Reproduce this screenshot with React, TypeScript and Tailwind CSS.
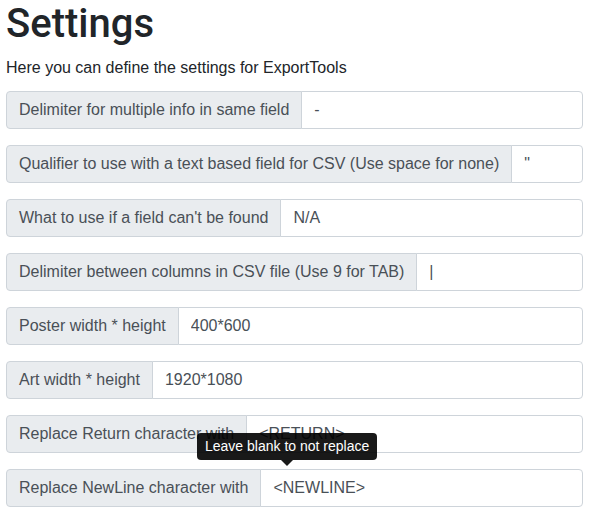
const rows: { label: string; value: string }[] = [
  { label: 'Delimiter for multiple info in same field', value: '-' },
  { label: 'Qualifier to use with a text based field for CSV (Use space for none)', value: '"' },
  { label: "What to use if a field can't be found", value: 'N/A' },
  { label: 'Delimiter between columns in CSV file (Use 9 for TAB)', value: '|' },
  { label: 'Poster width * height', value: '400*600' },
  { label: 'Art width * height', value: '1920*1080' },
  { label: 'Replace Return character with', value: '<RETURN>' },
  { label: 'Replace NewLine character with', value: '<NEWLINE>' },
];

function InputGroup({ label, value, children }: { label: string; value: string; children?: React.ReactNode }) {
  return (
    <div className="relative flex h-[38px] w-full items-stretch">
      <span className="flex items-center whitespace-nowrap rounded-l-[4px] border border-[#ced4da] bg-[#e9ecef] px-3 text-[16px] text-[#495057]">
        {label}
      </span>
      <input
        readOnly
        defaultValue={value}
        className="-ml-px min-w-0 flex-1 rounded-r-[4px] border border-[#ced4da] bg-white px-3 text-[16px] text-[#495057] outline-none"
      />
      {children}
    </div>
  );
}

export default function App() {
  return (
    <div className="min-h-[520px] bg-white pl-[6px] pr-[20px] font-['Liberation_Sans',Arial,sans-serif] text-[#212529]">
      <h1 className="m-0 font-['Roboto',sans-serif] text-[40px] font-medium leading-[48px]">Settings</h1>
      <p className="mt-2 mb-[11px] text-[16px] leading-6">Here you can define the settings for ExportTools</p>
      <div className="flex flex-col gap-4">
        {rows.map((r, i) => (
          <InputGroup key={r.label} label={r.label} value={r.value}>
            {i === rows.length - 1 && (
              <div className="absolute top-[-36px] left-[191px] z-10 flex flex-col items-center">
                <div className="rounded-[4px] bg-black/90 px-2 py-1 text-[14px] leading-[19px] whitespace-nowrap text-white">
                  Leave blank to not replace
                </div>
                <div className="h-0 w-0 border-x-[6px] border-t-[6px] border-x-transparent border-t-black/90" />
              </div>
            )}
          </InputGroup>
        ))}
      </div>
    </div>
  );
}
